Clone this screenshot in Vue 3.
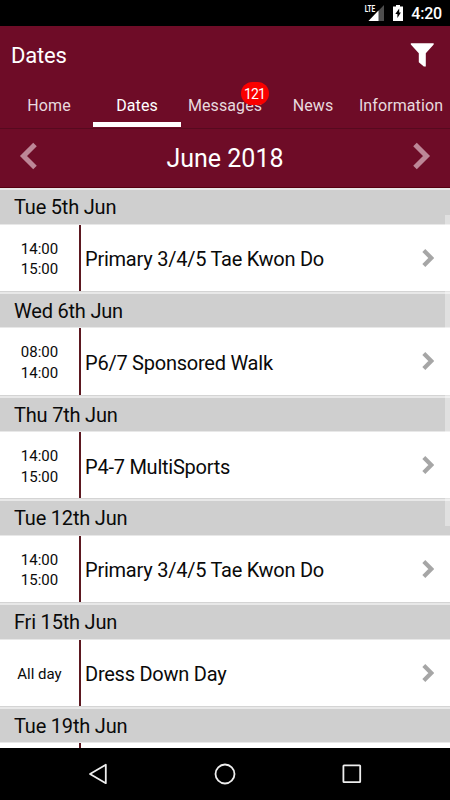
<script setup>
import { ref } from 'vue';

const tabs = ref([
  { name: 'Home' },
  { name: 'Dates' },
  { name: 'Messages', badge: 121 },
  { name: 'News' },
  { name: 'Information' }
]);
const activeTab = ref('Dates');

const events = ref([
  { date: 'Tue 5th Jun', times: ['14:00', '15:00'], title: 'Primary 3/4/5 Tae Kwon Do' },
  { date: 'Wed 6th Jun', times: ['08:00', '14:00'], title: 'P6/7 Sponsored Walk' },
  { date: 'Thu 7th Jun', times: ['14:00', '15:00'], title: 'P4-7 MultiSports' },
  { date: 'Tue 12th Jun', times: ['14:00', '15:00'], title: 'Primary 3/4/5 Tae Kwon Do' },
  { date: 'Fri 15th Jun', times: ['All day'], title: 'Dress Down Day' },
  { date: 'Tue 19th Jun', times: [], title: '' }
]);
</script>

<template>
  <div class="screen">
    <div class="status-bar">
      <svg class="signal" width="20" height="18" viewBox="0 0 20 18">
        <path d="M20 1V17H4.5Z" fill="#4d4d4d" />
        <path d="M14.5 6.5V17H4.5Z" fill="#fff" />
        <rect x="0" y="0" width="12" height="9" fill="#000" />
        <text class="lte" x="0.8" y="8" textLength="10.4" lengthAdjust="spacingAndGlyphs">LTE</text>
      </svg>
      <svg class="battery" width="10" height="16" viewBox="0 0 10 16">
        <path d="M3 0H7V1.5H10V16H0V1.5H3Z" fill="#fff" />
        <path d="M6.2 3.5L2.3 9.1H4.4V13L7.9 7.5H6.2Z" fill="#000" />
      </svg>
      <span class="clock">4:20</span>
    </div>

    <header class="title-bar">
      <h1>Dates</h1>
      <svg width="24" height="24" viewBox="0 0 24 24">
        <path d="M0.8 0.3H23.7V1.6L15.8 10.2V23.4H13.8L8.8 19.2V10.2L0.8 1.6Z" fill="#fff" />
      </svg>
    </header>

    <nav class="tabs">
      <div v-for="tab in tabs" :key="tab.name" class="tab" :class="{ active: tab.name === activeTab }" @click="activeTab = tab.name">
        <span>{{ tab.name }}</span>
        <b v-if="tab.badge" class="badge">{{ tab.badge }}</b>
      </div>
    </nav>

    <div class="month-bar">
      <svg width="18" height="28" viewBox="0 0 18 28">
        <path d="M16 2.5L4.5 14L16 25.5" fill="none" stroke="#bd8797" stroke-width="5" />
      </svg>
      <h2>June 2018</h2>
      <svg width="18" height="28" viewBox="0 0 18 28">
        <path d="M2 2.5L13.5 14L2 25.5" fill="none" stroke="#bd8797" stroke-width="5" />
      </svg>
    </div>

    <main class="list">
      <section v-for="event in events" :key="event.date" class="day">
        <h3>{{ event.date }}</h3>
        <div class="event">
          <div class="times">
            <span v-for="time in event.times" :key="time">{{ time }}</span>
          </div>
          <div class="event-title">{{ event.title }}</div>
          <svg width="12" height="18" viewBox="0 0 12 18">
            <path d="M1.8 1.5L9.3 9L1.8 16.5" fill="none" stroke="#a6a6a6" stroke-width="4.2" />
          </svg>
        </div>
      </section>
      <div class="scrollbar"></div>
    </main>

    <footer class="nav-bar">
      <svg width="20" height="22" viewBox="0 0 20 22">
        <path d="M17.8 1.8V20.2L2 11Z" fill="none" stroke="#eee" stroke-width="1.8" stroke-linejoin="round" />
      </svg>
      <svg width="22" height="22" viewBox="0 0 22 22">
        <circle cx="11" cy="11" r="9.5" fill="none" stroke="#eee" stroke-width="1.8" />
      </svg>
      <svg width="20" height="20" viewBox="0 0 20 20">
        <rect x="1.4" y="1.4" width="16.8" height="16.8" rx="0.6" fill="none" stroke="#eee" stroke-width="1.8" />
      </svg>
    </footer>
  </div>
</template>

<style>
body {
  margin: 0;
  background: #000;
}
</style>

<style scoped>
.screen {
  width: 450px;
  height: 800px;
  display: flex;
  flex-direction: column;
  overflow: hidden;
  font-family: Roboto, "Liberation Sans", sans-serif;
  color: #0a0a0a;
}
h1, h2, h3 {
  margin: 0;
  font-weight: 400;
}
svg {
  display: block;
  flex: none;
}
.status-bar {
  height: 26px;
  flex: none;
  display: flex;
  align-items: center;
  justify-content: flex-end;
  padding-right: 8px;
  box-sizing: border-box;
  background: #000;
  color: #fff;
}
.signal {
  align-self: flex-start;
  margin: 4px 9px 0 0;
}
.lte {
  font-size: 9.5px;
  font-weight: 700;
  fill: #fff;
}
.battery {
  margin-right: 8px;
}
.clock {
  font-size: 16px;
  font-weight: 500;
  line-height: 26px;
  letter-spacing: -0.2px;
  padding-top: 2px;
}
.title-bar {
  height: 58px;
  flex: none;
  display: flex;
  align-items: center;
  justify-content: space-between;
  padding: 0 16px 0 11px;
  background: #6e0c27;
  color: #fff;
}
.title-bar h1 {
  font-size: 22px;
  letter-spacing: -0.2px;
}
.tabs {
  height: 45px;
  flex: none;
  display: flex;
  padding: 0 5px;
  box-sizing: border-box;
  background: #6e0c27;
  border-bottom: 1px solid #570a1f;
}
.tab {
  position: relative;
  flex: 1 1 0;
  min-width: 0;
  display: flex;
  justify-content: center;
  box-sizing: border-box;
  height: 43px;
  font-size: 16px;
  line-height: 43px;
  letter-spacing: 0.1px;
  color: #e8dadf;
  white-space: nowrap;
}
.tab.active {
  border-bottom: 5px solid #fff;
  color: #fff;
}
.badge {
  position: absolute;
  left: 60px;
  top: -2px;
  width: 28px;
  height: 23px;
  border-radius: 12px;
  background: #f90000;
  color: #fff;
  font-size: 14px;
  font-weight: 400;
  letter-spacing: -0.8px;
  text-indent: -0.8px;
  line-height: 25px;
  text-align: center;
}
.month-bar {
  height: 59px;
  flex: none;
  display: flex;
  align-items: center;
  justify-content: space-between;
  padding: 0 19px;
  box-sizing: border-box;
  background: #6e0c27;
  border-bottom: 1px solid #550010;
  color: #fff;
}
.month-bar svg {
  margin-bottom: 4px;
}
.month-bar h2 {
  font-size: 25px;
  padding-top: 1px;
}
.list {
  position: relative;
  flex: 1;
  min-height: 0;
  overflow: hidden;
  background: #fff;
}
.day {
  height: 103.75px;
}
.day h3 {
  height: 36.5px;
  box-sizing: border-box;
  padding-left: 14px;
  border-top: 2px solid #e8e8e8;
  border-bottom: 1px solid #e8e8e8;
  background: #cfcfcf;
  font-size: 20px;
  letter-spacing: -0.2px;
  line-height: 35px;
}
.event {
  height: 67.25px;
  box-sizing: border-box;
  display: flex;
  align-items: center;
  padding-right: 16px;
  border-bottom: 1px solid #d4d4d4;
}
.times {
  width: 81px;
  align-self: stretch;
  box-sizing: border-box;
  display: flex;
  flex-direction: column;
  justify-content: center;
  border-right: 2px solid #5c1820;
  font-size: 15px;
  line-height: 20.5px;
  text-align: center;
  padding-top: 3px;
}
.event-title {
  flex: 1;
  padding: 3px 0 0 4px;
  font-size: 20px;
  letter-spacing: -0.24px;
}
.scrollbar {
  position: absolute;
  right: 0;
  top: 27px;
  width: 5px;
  height: 311px;
  background: rgba(255, 255, 255, 0.35);
}
.nav-bar {
  height: 52px;
  flex: none;
  display: flex;
  align-items: center;
  justify-content: center;
  gap: 106px;
  background: #000;
}
</style>
